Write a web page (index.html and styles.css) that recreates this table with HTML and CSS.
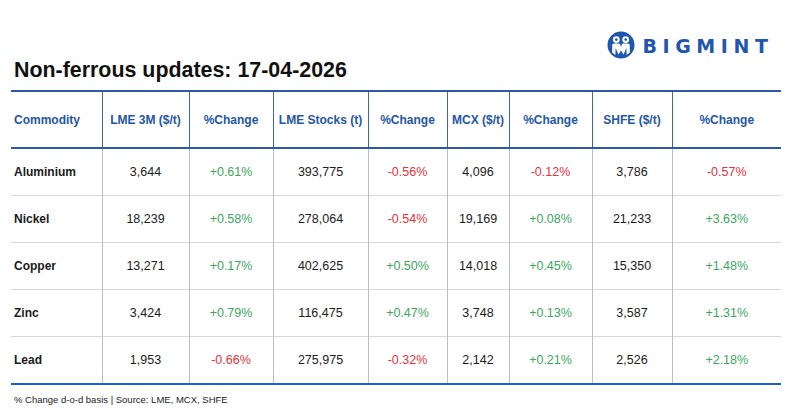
FILE: index.html
```html
<!DOCTYPE html>
<html>
<head>
<meta charset="utf-8">
<link rel="stylesheet" href="styles.css">
</head>
<body>
<div class="page">
  <div class="brand">
    <svg class="logo-mark" width="28" height="28" viewBox="0 0 28 28">
      <circle cx="14" cy="14" r="13.5" fill="#1f56b0"/>
      <circle cx="9.3" cy="8.6" r="3.4" fill="#fff"/>
      <circle cx="18.7" cy="8.6" r="3.4" fill="#fff"/>
      <circle cx="9.3" cy="8.6" r="1.3" fill="#1f56b0"/>
      <circle cx="18.7" cy="8.6" r="1.3" fill="#1f56b0"/>
      <path d="M5.2 14.2 Q5.2 12.6 7 12.6 L11.6 12.6 Q13 12.6 13.4 14 L14 16 L14.6 14 Q15 12.6 16.4 12.6 L21 12.6 Q22.8 12.6 22.8 14.2 L22.8 21.5 L19.6 24 L19.4 17 L16.5 23.5 L14 19.5 L11.5 23.5 L8.6 17 L8.4 24 L5.2 21.5 Z" fill="#fff"/>
    </svg>
    <span class="logo-text">BIGMINT</span>
  </div>
  <h1 class="title">Non-ferrous updates: 17-04-2026</h1>
  <table class="data">
    <colgroup>
      <col style="width:91px"><col style="width:87px"><col style="width:84px"><col style="width:95px"><col style="width:79px"><col style="width:62px"><col style="width:83px"><col style="width:80px"><col style="width:109px">
    </colgroup>
    <thead>
      <tr>
        <th class="first">Commodity</th>
        <th>LME 3M ($/t)</th>
        <th>%Change</th>
        <th>LME Stocks (t)</th>
        <th>%Change</th>
        <th>MCX ($/t)</th>
        <th>%Change</th>
        <th>SHFE ($/t)</th>
        <th>%Change</th>
      </tr>
    </thead>
    <tbody>
      <tr>
        <td class="first">Aluminium</td><td>3,644</td><td class="up">+0.61%</td><td>393,775</td><td class="down">-0.56%</td><td>4,096</td><td class="down">-0.12%</td><td>3,786</td><td class="down">-0.57%</td>
      </tr>
      <tr>
        <td class="first">Nickel</td><td>18,239</td><td class="up">+0.58%</td><td>278,064</td><td class="down">-0.54%</td><td>19,169</td><td class="up">+0.08%</td><td>21,233</td><td class="up">+3.63%</td>
      </tr>
      <tr>
        <td class="first">Copper</td><td>13,271</td><td class="up">+0.17%</td><td>402,625</td><td class="up">+0.50%</td><td>14,018</td><td class="up">+0.45%</td><td>15,350</td><td class="up">+1.48%</td>
      </tr>
      <tr>
        <td class="first">Zinc</td><td>3,424</td><td class="up">+0.79%</td><td>116,475</td><td class="up">+0.47%</td><td>3,748</td><td class="up">+0.13%</td><td>3,587</td><td class="up">+1.31%</td>
      </tr>
      <tr>
        <td class="first">Lead</td><td>1,953</td><td class="down">-0.66%</td><td>275,975</td><td class="down">-0.32%</td><td>2,142</td><td class="up">+0.21%</td><td>2,526</td><td class="up">+2.18%</td>
      </tr>
    </tbody>
  </table>
  <p class="note">% Change d-o-d basis | Source: LME, MCX, SHFE</p>
</div>
</body>
</html>
```

FILE: styles.css
```css
html, body {
  margin: 0;
  padding: 0;
  background: #ffffff;
}

.page {
  width: 770px;
  padding: 30px 0 0 11px;
  font-family: "Liberation Sans", Arial, sans-serif;
  color: #1b1b1b;
}

.brand {
  display: flex;
  justify-content: flex-end;
  align-items: center;
  gap: 7px;
  height: 28px;
  padding-right: 13px;
}

.logo-mark {
  display: block;
  margin-top: 1px;
}

.logo-text {
  font-family: "DejaVu Sans", sans-serif;
  font-size: 19px;
  font-weight: bold;
  letter-spacing: 5.6px;
  color: #1f56b0;
  line-height: 20px;
  margin-top: 3px;
  margin-right: -5.6px;
}

.title {
  margin: 0 0 8px 0;
  padding-left: 3px;
  font-size: 21.4px;
  line-height: 24px;
  font-weight: bold;
  color: #111;
}

.data {
  width: 770px;
  border-collapse: collapse;
  table-layout: fixed;
  border-top: 2px solid #2a5aa8;
  border-bottom: 2px solid #1d5fd2;
}

.data th {
  height: 55px;
  padding: 0;
  font-size: 12px;
  font-weight: bold;
  color: #1f56a8;
  text-align: center;
  border-left: 1px solid #3a66ac;
  border-bottom: 2px solid #2a5aa8;
  white-space: nowrap;
}

.data td {
  height: 46px;
  padding: 0;
  font-size: 12.5px;
  text-align: center;
  border-left: 1px solid #bdbdbd;
  border-top: 1px solid #d8d8d8;
  color: #1b1b1b;
}

.data .first {
  border-left: none;
  text-align: left;
  padding-left: 3px;
}

.data td.first {
  font-weight: bold;
  font-size: 12px;
}

.data td.up {
  color: #3aa860;
}

.data td.down {
  color: #e8323c;
}

.note {
  margin: 9px 0 0 3px;
  font-size: 9.5px;
  color: #222;
}
```
